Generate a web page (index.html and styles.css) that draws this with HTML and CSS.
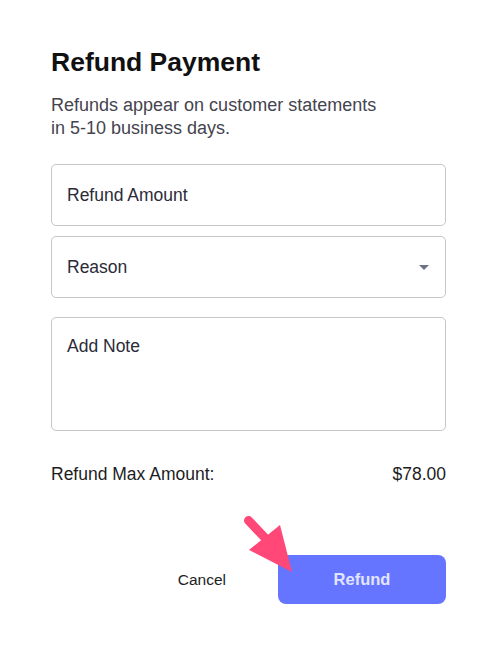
FILE: index.html
```html
<!DOCTYPE html>
<html>
<head>
<meta charset="utf-8">
<link rel="stylesheet" href="styles.css">
</head>
<body>
<div class="page">
  <div class="modal">
    <h1 class="title">Refund Payment</h1>
    <p class="desc">Refunds appear on customer statements<br>in 5-10 business days.</p>
    <div class="field field-amount"><span class="label">Refund Amount</span></div>
    <div class="field field-reason">
      <span class="label">Reason</span>
      <svg class="caret" width="10" height="5" viewBox="0 0 10 5"><polygon points="0,0 10,0 5,5" fill="#6b7385"/></svg>
    </div>
    <div class="field field-note"><span class="label">Add Note</span></div>
    <div class="max-row"><span>Refund Max Amount:</span><span>$78.00</span></div>
    <div class="actions">
      <button class="btn-cancel">Cancel</button>
      <button class="btn-refund">Refund</button>
    </div>
  </div>
  <svg class="pointer" width="60" height="70" viewBox="0 0 60 70">
    <line x1="8.5" y1="10.5" x2="27" y2="30" stroke="#ff4778" stroke-width="9" stroke-linecap="round"/>
    <polygon points="9,40 40,15 52,62" fill="#ff4778"/>
  </svg>
</div>
</body>
</html>
```

FILE: styles.css
```css
html, body {
  margin: 0;
  padding: 0;
  background: #ffffff;
}
body {
  font-family: "Liberation Sans", Arial, sans-serif;
}
.page {
  position: relative;
  width: 497px;
  height: 648px;
}
.modal {
  padding: 47px 51px 0 51px;
  width: 395px;
}
.title {
  margin: 0;
  font-size: 26.5px;
  line-height: 30px;
  font-weight: 700;
  color: #111111;
}
.desc {
  margin: 17px 0 0 0;
  font-size: 18px;
  line-height: 23px;
  color: #44444f;
}
.field {
  box-sizing: border-box;
  border: 1px solid #c6c6c9;
  border-radius: 5px;
  display: flex;
  align-items: center;
  padding: 0 15px;
  height: 62px;
}
.field-amount {
  margin-top: 24px;
}
.field-reason {
  margin-top: 10px;
  justify-content: space-between;
}
.field-note {
  margin-top: 19px;
  height: 114px;
  align-items: flex-start;
  padding-top: 18px;
}
.label {
  font-size: 17.5px;
  line-height: 20px;
  color: #2b2b38;
}
.caret {
  display: block;
  margin-right: 1px;
}
.max-row {
  margin-top: 33px;
  display: flex;
  justify-content: space-between;
  font-size: 17.5px;
  line-height: 20px;
  color: #1d1d24;
}
.actions {
  margin-top: 71px;
  display: flex;
  justify-content: flex-end;
  align-items: center;
  gap: 52px;
}
.btn-cancel {
  background: none;
  border: none;
  padding: 0;
  font-family: "Liberation Sans", Arial, sans-serif;
  font-size: 15.5px;
  color: #1d1d24;
}
.btn-refund {
  width: 168px;
  height: 49px;
  border: none;
  border-radius: 8px;
  background: #6675ff;
  color: #e2e5ff;
  font-family: "Liberation Sans", Arial, sans-serif;
  font-size: 16.5px;
  font-weight: 700;
}
.pointer {
  position: absolute;
  left: 240px;
  top: 510px;
}
```
